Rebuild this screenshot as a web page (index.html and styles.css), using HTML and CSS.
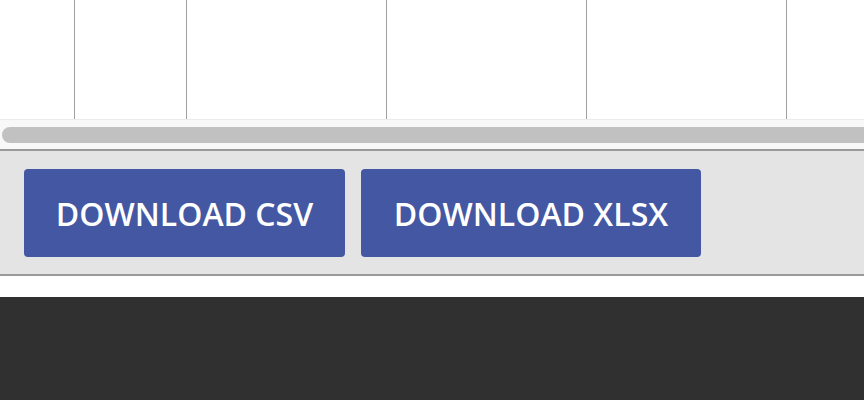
FILE: index.html
```html
<!DOCTYPE html>
<html>
<head>
<meta charset="utf-8">
<link rel="stylesheet" href="styles.css">
</head>
<body>
<div class="grid">
  <div class="row">
    <div class="cell c1"></div>
    <div class="cell c2"></div>
    <div class="cell c3"></div>
    <div class="cell c3"></div>
    <div class="cell c3"></div>
    <div class="cell c4"></div>
  </div>
  <div class="scroll">
    <div class="thumb"></div>
  </div>
</div>
<div class="panel">
  <button class="btn btn-csv">DOWNLOAD CSV</button>
  <button class="btn btn-xlsx">DOWNLOAD XLSX</button>
</div>
<div class="spacer"></div>
<div class="footer"></div>
</body>
</html>
```
FILE: styles.css
```css
html, body {
  margin: 0;
  padding: 0;
  background: #ffffff;
  font-family: "Open Sans", "Liberation Sans", sans-serif;
  overflow: hidden;
}
.grid {
  width: 864px;
}
.row {
  display: flex;
  height: 119px;
  border-bottom: 1px solid #ebebeb;
  overflow: hidden;
}
.cell {
  flex: none;
  height: 100%;
  border-right: 1px solid #a0a0a0;
  box-sizing: border-box;
}
.c1 { width: 75px; }
.c2 { width: 112px; }
.c3 { width: 200px; }
.c4 { width: 200px; }
.scroll {
  height: 29px;
  background: #f8f8f8;
  padding: 7px 0 6px 2px;
  box-sizing: border-box;
}
.thumb {
  height: 16px;
  background: #c1c1c1;
  border-radius: 8px 0 0 8px;
}
.panel {
  display: flex;
  gap: 16px;
  padding: 18px 24px 17px;
  background: #e4e4e4;
  border-top: 2px solid #999999;
  border-bottom: 2px solid #999999;
}
.btn {
  flex: none;
  height: 88px;
  padding: 0;
  border: none;
  border-radius: 4px;
  background: #4357a3;
  color: #ffffff;
  font-family: "Open Sans", "Liberation Sans", sans-serif;
  font-weight: 600;
  font-size: 32px;
  white-space: nowrap;
  text-align: center;
}
.btn-csv { width: 321px; }
.btn-xlsx { width: 340px; }
.spacer {
  height: 21px;
  background: #ffffff;
}
.footer {
  height: 110px;
  background: #303030;
}
```
